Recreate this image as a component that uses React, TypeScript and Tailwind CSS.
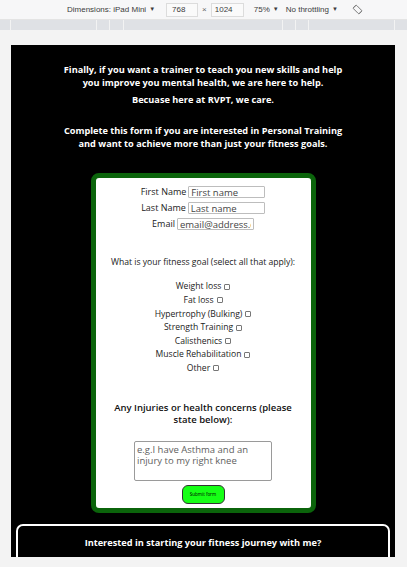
import React from "react";

const goals = [
  "Weight loss",
  "Fat loss",
  "Hypertrophy (Bulking)",
  "Strength Training",
  "Calisthenics",
  "Muscle Rehabilitation",
  "Other",
];

function Toolbar() {
  return (
    <div className="w-full" style={{ fontFamily: '"Liberation Sans", Arial, sans-serif' }}>
      <div className="h-[20px] bg-[#f7f7f8] border-b border-[#e4e4e4] flex items-center text-[8px] text-[#3c3c3c]">
        <div className="ml-[67px] flex items-center gap-[3px]">
          <span>Dimensions: iPad Mini</span>
          <span className="text-[6px]">▼</span>
        </div>
        <div className="ml-[11px] w-[32px] h-[14px] border border-[#dcdcdc] bg-[#fafafa] flex items-center pl-[5px]">768</div>
        <span className="mx-[4px] text-[8px] text-[#666]">×</span>
        <div className="w-[33px] h-[14px] border border-[#dcdcdc] bg-[#fafafa] flex items-center pl-[3px]">1024</div>
        <div className="ml-[10px] flex items-center gap-[3px]">
          <span>75%</span>
          <span className="text-[6px]">▼</span>
        </div>
        <div className="ml-[7px] flex items-center gap-[3px]">
          <span>No throttling</span>
          <span className="text-[6px]">▼</span>
        </div>
        <svg className="ml-[14px]" width="11" height="11" viewBox="0 0 12 12" fill="none" stroke="#777" strokeWidth="1">
          <rect x="3.5" y="1.5" width="5" height="9" rx="1" transform="rotate(-45 6 6)" />
          <path d="M1.5 4.5 A5 5 0 0 1 4.5 1.5" />
          <path d="M10.5 7.5 A5 5 0 0 1 7.5 10.5" />
        </svg>
      </div>
      <div className="h-[10px] bg-[#dfe1e5] flex">
        <div className="w-[11px] border-r border-[#f3f3f3]" />
        <div className="w-[86px] border-r border-[#f3f3f3]" />
        <div className="w-[13px] border-r border-[#f3f3f3]" />
        <div className="w-[14px] border-r border-[#f3f3f3]" />
        <div className="w-[159px] border-r border-[#f3f3f3]" />
        <div className="w-[13px] border-r border-[#f3f3f3]" />
        <div className="w-[13px] border-r border-[#f3f3f3]" />
        <div className="w-[86px] border-r border-[#f3f3f3]" />
        <div className="flex-1" />
      </div>
    </div>
  );
}

function Field({ label, placeholder }: { label: string; placeholder: string }) {
  return (
    <div className="flex items-center justify-center gap-[2px] h-[12px]">
      <span className="text-[9px] text-[#222]">{label}</span>
      <input
        readOnly
        placeholder={placeholder}
        className="w-[77px] h-[12px] border border-[#bdbdbd] rounded-[1px] px-[2px] text-[9.5px] leading-[10px] bg-white placeholder:text-[#444] outline-none"
      />
    </div>
  );
}

export default function App() {
  return (
    <div
      className="w-[407px] h-[567px] bg-[#f3f3f3] overflow-hidden"
      style={{ fontFamily: '"Open Sans", "Noto Sans", sans-serif' }}
    >
      <Toolbar />
      <div className="mx-[11px] mt-[15px] w-[384px] h-[512px] bg-black flex flex-col items-center overflow-hidden">
        <div className="pt-[18px] text-white font-bold text-[9.2px] leading-[13px] text-center">
          <p>
            Finally, if you want a trainer to teach you new skills and help
            <br />
            you improve you mental health, we are here to help.
          </p>
          <p className="mt-[4px]">Becuase here at RVPT, we care.</p>
          <p className="mt-[18px]">
            Complete this form if you are interested in Personal Training
            <br />
            and want to achieve more than just your fitness goals.
          </p>
        </div>

        <div className="mt-[23px] w-[225px] border-[5px] border-[#0b640b] rounded-[8px] bg-white flex flex-col items-center pt-[8px] pb-[4px] text-[#222]">
          <div className="flex flex-col items-center gap-[4px]">
            <Field label="First Name" placeholder="First name" />
            <Field label="Last Name" placeholder="Last name" />
            <Field label="Email" placeholder="email@address.com" />
          </div>

          <p className="mt-[26px] text-[8.6px] leading-[12px] text-center">
            What is your fitness goal (select all that apply):
          </p>

          <div className="mt-[12px] flex flex-col items-center">
            {goals.map((g) => (
              <div key={g} className="h-[13.6px] flex items-center gap-[3px] text-[8.6px]">
                <span>{g}</span>
                <span className="w-[6px] h-[6px] border border-[#777] rounded-[1px] bg-white" />
              </div>
            ))}
          </div>

          <p className="mt-[27px] w-[182px] text-[9.5px] leading-[12px] font-semibold text-center text-[#111]">
            Any Injuries or health concerns (please state below):
          </p>

          <textarea
            readOnly
            placeholder={"e.g.I have Asthma and an injury to my right knee"}
            className="mt-[15px] w-[138px] h-[40px] border border-[#9a9a9a] rounded-[2px] px-[2px] py-[2px] text-[9.5px] leading-[11px] resize-none placeholder:text-[#5e5e5e] outline-none"
          />

          <button className="mt-[4px] w-[43px] h-[19px] bg-[#16ff16] border border-[#333] rounded-[6px] text-[4.5px] text-black flex items-center justify-center">
            Submit form
          </button>
        </div>

        <div className="mt-[11px] w-[374px] h-[80px] shrink-0 border-2 border-white rounded-[7px] flex flex-col items-center pt-[10px]">
          <p className="text-white font-bold text-[9.2px] leading-[13px]">
            Interested in starting your fitness journey with me?
          </p>
        </div>
      </div>
    </div>
  );
}
